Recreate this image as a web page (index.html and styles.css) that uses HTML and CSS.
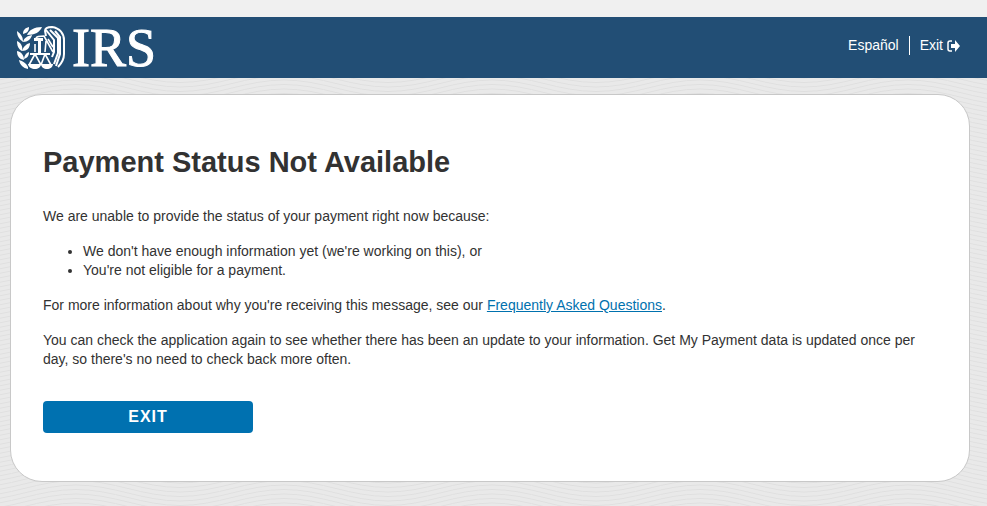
FILE: index.html
```html
<!DOCTYPE html>
<html lang="en">
<head>
<meta charset="utf-8">
<meta name="viewport" content="width=device-width, initial-scale=1">
<title>Payment Status Not Available</title>
<link rel="stylesheet" href="styles.css">
</head>
<body>
<header class="site-header">
  <div class="brand">
    <svg class="brand-mark" viewBox="0 0 49 44" aria-hidden="true">
      <g fill="#fff">
        <path d="M10 9C12 4 17 1 25 1c-2 5-7 8-15 8z"/>
        <path d="M6 8C6 4 8 2 12 1c0 4-2 6-6 7z"/>
        <path d="M6 16C2 13 0 10 0 5c4 3 6 6 6 11z"/>
        <path d="M6 16c1-4 4-6 9-7-1 4-4 7-9 7z"/>
        <path d="M5 25C1 23 0 19 0 15c4 2 6 5 5 10z"/>
        <path d="M5 25c1-4 4-7 8-8 0 5-3 8-8 8z"/>
        <path d="M7 34C2 33 0 30 0 25c5 1 7 5 7 9z"/>
        <path d="M7 33c0-3 2-6 5-7 0 4-2 6-5 7z"/>
        <path d="M2 34c4 1 7 3 9 7v2C6 42 3 39 2 34z"/>
        <path d="M11 38h13c0 3-3 5-6 5s-7-2-7-5zM24 38h12c0 3-3 5-6 5s-6-2-6-5z"/>
        <path d="M17 12h9v3h-2v14h-3V15h-4z"/>
        <path d="M13 27h20v2H13z"/>
      </g>
      <g fill="none" stroke="#fff" stroke-width="1.600">
        <path d="M18 28l-6 11M18 28l6 11M28 28l-4 11M28 28l6 11"/>
        <path d="M19 12c1-2 4-2 8-2l9 16M29 15l-1 11M18 18v8"/>
        <path d="M29 10l-1-5c0-3 3-4 7-4 8 1 12 7 12 13v14c0 5-2 9-6 13" stroke-width="2"/>
        <path d="M29 4l8 10v12l-2 5M33 4l8 8v15l-4 11M38 5l5 6v17l-4 12" stroke-width="2"/>
        <path d="M31 13l5 8"/>
      </g>
    </svg>
    <span class="brand-name">IRS</span>
  </div>
  <nav class="site-nav">
    <a class="nav-link" href="#">Español</a>
    <a class="nav-link" href="#">Exit
      <svg class="exit-icon" viewBox="0 0 14 12" aria-hidden="true">
        <path d="M5 1H3Q1 1 1 3v6q0 2 2 2h2" fill="none" stroke="#fff" stroke-width="1.500"/>
        <path d="M4 4h4V0l5 6-5 6V8H4z" fill="#fff"/>
      </svg>
    </a>
  </nav>
</header>
<div class="backdrop">
  <svg class="waves" aria-hidden="true">
    <defs>
      <path id="wave" d="M0 0C38 0 66-16 104-16S170 0 208 0"/>
      <pattern id="waves" x="-28" width="208" height="9" patternUnits="userSpaceOnUse">
        <g fill="none" stroke="#e0e0e0">
          <use href="#wave"/>
          <use href="#wave" y="4.500"/>
          <use href="#wave" y="9"/>
          <use href="#wave" y="13.500"/>
          <use href="#wave" y="18"/>
          <use href="#wave" y="22.500"/>
          <use href="#wave" y="27"/>
        </g>
      </pattern>
    </defs>
    <rect width="100%" height="100%" fill="url(#waves)"/>
  </svg>
  <main class="card">
    <h1 class="title">Payment Status Not Available</h1>
    <p>We are unable to provide the status of your payment right now because:</p>
    <ul class="reasons">
      <li>We don't have enough information yet (we're working on this), or</li>
      <li>You're not eligible for a payment.</li>
    </ul>
    <p>For more information about why you're receiving this message, see our <a class="text-link" href="#">Frequently Asked Questions</a>.</p>
    <p>You can check the application again to see whether there has been an update to your information. Get My Payment data is updated once per day, so there's no need to check back more often.</p>
    <button class="exit-button" type="button">EXIT</button>
  </main>
</div>
</body>
</html>
```
FILE: styles.css
```css
* {
  box-sizing: border-box;
}

body {
  display: flex;
  flex-direction: column;
  min-height: 100vh;
  margin: 0;
  padding-top: 17px;
  background: #f0f0f0;
  color: #323232;
  font: 14px/19px "Liberation Sans", Arial, sans-serif;
}

.site-header {
  display: flex;
  align-items: center;
  justify-content: space-between;
  height: 61px;
  padding: 0 26px 0 17px;
  background: #224e75;
  color: #fff;
}

.brand {
  display: flex;
  align-items: center;
  gap: 6px;
}

.brand-mark {
  width: 49px;
  height: 44px;
}

.brand-name {
  font: 54px/60px "Liberation Serif", "Times New Roman", serif;
  -webkit-text-stroke: 1px #fff;
}

.site-nav {
  display: flex;
  align-items: center;
  padding-bottom: 4px;
}

.nav-link {
  display: flex;
  align-items: center;
  gap: 4px;
  color: #fff;
  text-decoration: none;
}

.nav-link + .nav-link {
  margin-left: 10px;
  padding-left: 10px;
  border-left: 1px solid #fff;
}

.exit-icon {
  width: 14px;
  height: 12px;
}

.backdrop {
  position: relative;
  flex: 1;
  padding: 16px 17px 24px 10px;
  background: #e9e9e9;
}

.waves {
  position: absolute;
  inset: 0;
  width: 100%;
  height: 100%;
}

.card {
  position: relative;
  padding: 48px 32px;
  border: 1px solid #c8c8c8;
  border-radius: 32px;
  background: #fff;
}

.title {
  margin: 0 0 26px;
  font-size: 29px;
  line-height: 38px;
}

p,
.reasons {
  margin: 0 0 16px;
}

.reasons {
  padding-left: 40px;
}

.text-link {
  color: #0071ae;
}

.exit-button {
  display: block;
  width: 210px;
  height: 32px;
  margin-top: 32px;
  border: 0;
  border-radius: 4px;
  background: #0071b0;
  color: #fff;
  font: bold 16px/20px "Liberation Sans", Arial, sans-serif;
  letter-spacing: 1px;
}
```
